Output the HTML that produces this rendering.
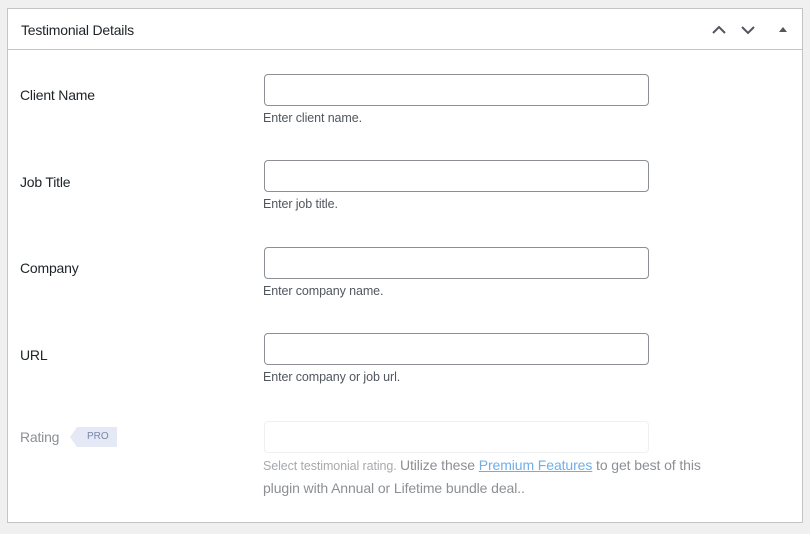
<!DOCTYPE html>
<html><head><meta charset="utf-8"><style>
*{box-sizing:border-box;margin:0;padding:0}
body{width:810px;height:534px;background:#f0f0f1;font-family:"Liberation Sans",sans-serif;color:#1d2327;position:relative;overflow:hidden}
.panel{position:absolute;left:7px;top:8px;width:796px;height:515px;background:#fff;border:1px solid #c3c4c7}
.hdr{height:41px;border-bottom:1px solid #c3c4c7;position:relative}
.hdr h2{position:absolute;left:13px;top:13px;font-size:14px;font-weight:normal;letter-spacing:-0.2px}
.lbl{position:absolute;left:13px;font-size:14px;letter-spacing:-0.2px}
.inp{position:absolute;left:256px;width:385px;height:32px;border:1px solid #8c8f94;border-radius:4px;background:#fff}
.help{position:absolute;left:255px;font-size:12.5px;color:#50575e;letter-spacing:-0.1px}
.pro{position:absolute;height:20px;width:40px;background:#e5e9f5;color:#7a86a8;font-size:10px;line-height:20px;padding-left:10px}
.pro:before{content:"";position:absolute;left:-7px;top:0;border-right:7px solid #e5e9f5;border-top:10px solid transparent;border-bottom:10px solid transparent}
a{color:#72aee6}
</style></head><body>
<div class="panel">
<div class="hdr"><h2>Testimonial Details</h2>
<svg style="position:absolute;left:703px;top:13px" width="80" height="16" viewBox="0 0 80 16">
<path d="M2 11 L8 5 L14 11" stroke="#50575e" stroke-width="2" fill="none"/>
<path d="M31 5 L37 11 L43 5" stroke="#50575e" stroke-width="2" fill="none"/>
<path d="M68 10 L72 5 L76 10 Z" fill="#50575e"/>
</svg></div>
</div>
<div class="lbl" style="top:87px;left:20px">Client Name</div>
<div class="inp" style="top:74px;left:264px"></div>
<div class="help" style="top:111px;left:263px">Enter client name.</div>
<div class="lbl" style="top:174px;left:20px">Job Title</div>
<div class="inp" style="top:160px;left:264px"></div>
<div class="help" style="top:197px;left:263px">Enter job title.</div>
<div class="lbl" style="top:260px;left:20px">Company</div>
<div class="inp" style="top:247px;left:264px"></div>
<div class="help" style="top:284px;left:263px">Enter company name.</div>
<div class="lbl" style="top:347px;left:20px">URL</div>
<div class="inp" style="top:333px;left:264px"></div>
<div class="help" style="top:370px;left:263px">Enter company or job url.</div>
<div class="lbl" style="top:429px;left:20px;color:#8c8f94">Rating</div>
<div class="pro" style="left:77px;top:427px">PRO</div>
<div class="inp" style="top:421px;left:264px;border-color:#f0f0f1"></div>
<div class="help" style="top:454px;left:263px;color:#a7aaad;font-size:12.5px;line-height:22px;width:470px"><span>Select testimonial rating.</span> <span style="font-size:14px;color:#8c8f94">Utilize these <a href="#">Premium Features</a> to get best of this plugin with Annual or Lifetime bundle deal..</span></div>
</body></html>
